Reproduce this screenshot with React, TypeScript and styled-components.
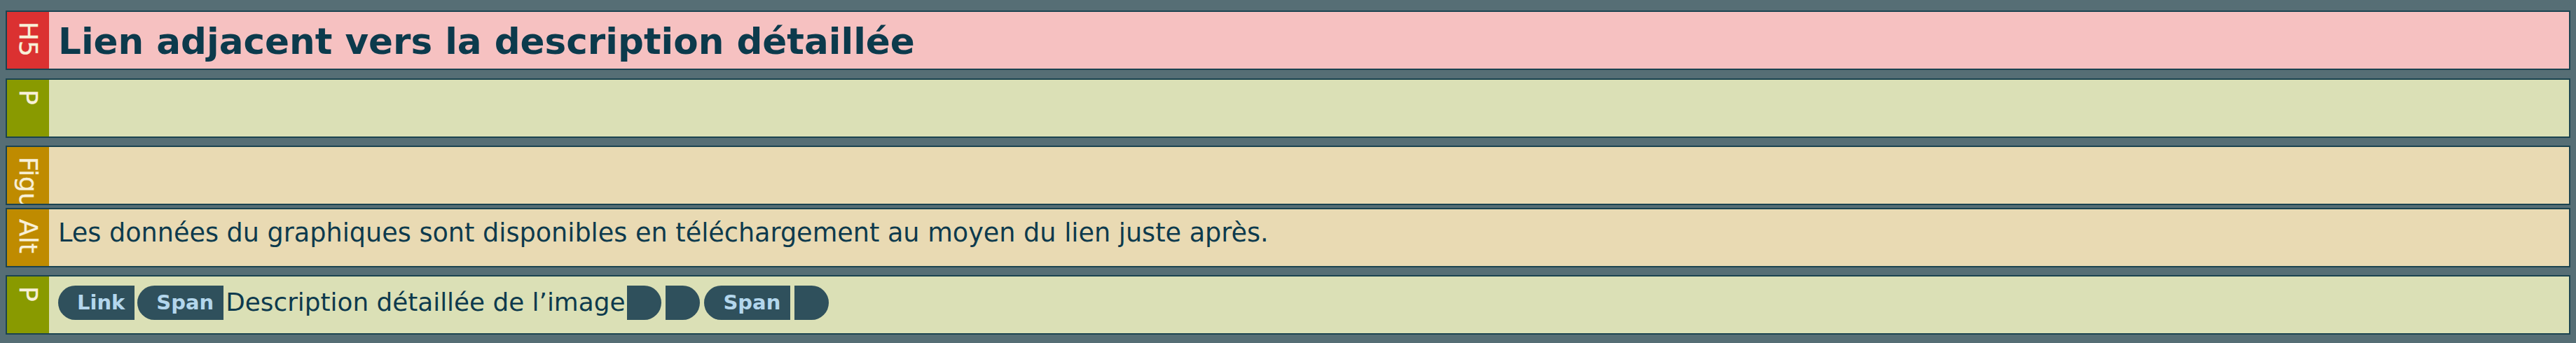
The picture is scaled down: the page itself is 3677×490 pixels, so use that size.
import React from "react";
import styled, { createGlobalStyle } from "styled-components";

const Global = createGlobalStyle`
  html, body { margin: 0; padding: 0; }
  body {
    background: #566e75;
    font-family: "DejaVu Sans", Verdana, sans-serif;
    color: #0d3a4d;
  }
`;

type Tone = "heading" | "para" | "figure";

const tones: Record<Tone, { label: string; bg: string }> = {
  heading: { label: "#db3131", bg: "#f6c1c1" },
  para: { label: "#899a00", bg: "#dbe0b6" },
  figure: { label: "#bf8b00", bg: "#e9dab3" },
};

const Page = styled.div`
  padding: 15px 8px 17px 8px;
  display: flex;
  flex-direction: column;
`;

const Block = styled.section<{ $tone: Tone; $after?: number }>`
  display: flex;
  box-sizing: border-box;
  height: 85px;
  border: 2px solid #1b4350;
  background: ${(p) => tones[p.$tone].bg};
  margin-bottom: ${(p) => (p.$after ?? 0)}px;
  overflow: hidden;
`;

const Label = styled.div<{ $tone: Tone }>`
  flex: 0 0 60px;
  background: ${(p) => tones[p.$tone].label};
  display: flex;
  justify-content: center;
  align-items: flex-start;
  padding-top: 14px;
  overflow: hidden;
`;

const LabelText = styled.span`
  writing-mode: vertical-rl;
  color: #f8f0d8;
  font-size: 36px;
  font-weight: 500;
  line-height: 40px;
  white-space: nowrap;
  -webkit-text-stroke: 0.4px #f8f0d8;
`;

const Content = styled.div`
  flex: 1;
  display: flex;
  align-items: center;
  padding: 0 12px 0 13px;
  min-width: 0;
`;

const Title = styled.h5`
  margin: 0;
  font-size: 51.6px;
  font-weight: bold;
  line-height: 60px;
  color: #0c3a4c;
  padding-top: 2px;
`;

const Text = styled.span<{ $size: number; $gap?: number }>`
  font-size: ${(p) => p.$size}px;
  line-height: 44px;
  white-space: nowrap;
  margin-right: ${(p) => p.$gap ?? 0}px;
`;

const AltText = styled(Text)`
  padding-bottom: 13px;
`;

const Pill = styled.span<{ $kind: "open" | "close"; $gap?: number }>`
  display: inline-flex;
  align-items: center;
  box-sizing: border-box;
  height: 49px;
  background: #2f505c;
  color: #b3d6ec;
  font-size: 29px;
  font-weight: bold;
  white-space: nowrap;
  margin-right: ${(p) => p.$gap ?? 0}px;
  ${(p) =>
    p.$kind === "open"
      ? `border-radius: 25px 0 0 25px; padding: 0 14px 0 27px;`
      : `border-radius: 0 25px 25px 0; width: 49px;`}
`;

const Inline = styled.div`
  display: flex;
  align-items: center;
  padding-bottom: 7px;
`;

export default function App() {
  return (
    <>
      <Global />
      <Page>
        <Block $tone="heading" $after={12}>
          <Label $tone="heading">
            <LabelText>H5</LabelText>
          </Label>
          <Content>
            <Title>Lien adjacent vers la description détaillée</Title>
          </Content>
        </Block>
        <Block $tone="para" $after={11}>
          <Label $tone="para">
            <LabelText>P</LabelText>
          </Label>
          <Content />
        </Block>
        <Block $tone="figure" $after={4}>
          <Label $tone="figure">
            <LabelText>Figure</LabelText>
          </Label>
          <Content />
        </Block>
        <Block $tone="figure" $after={11}>
          <Label $tone="figure">
            <LabelText>Alt</LabelText>
          </Label>
          <Content>
            <AltText $size={36.6}>
              Les données du graphiques sont disponibles en téléchargement au
              moyen du lien juste après.
            </AltText>
          </Content>
        </Block>
        <Block $tone="para">
          <Label $tone="para">
            <LabelText>P</LabelText>
          </Label>
          <Content>
            <Inline>
              <Pill $kind="open" $gap={4}>Link</Pill>
              <Pill $kind="open" $gap={3}>Span</Pill>
              <Text $size={35.8} $gap={3}>Description détaillée de l’image</Text>
              <Pill $kind="close" $gap={6} />
              <Pill $kind="close" $gap={6} />
              <Pill $kind="open" $gap={6}>Span</Pill>
              <Pill $kind="close" />
            </Inline>
          </Content>
        </Block>
      </Page>
    </>
  );
}
